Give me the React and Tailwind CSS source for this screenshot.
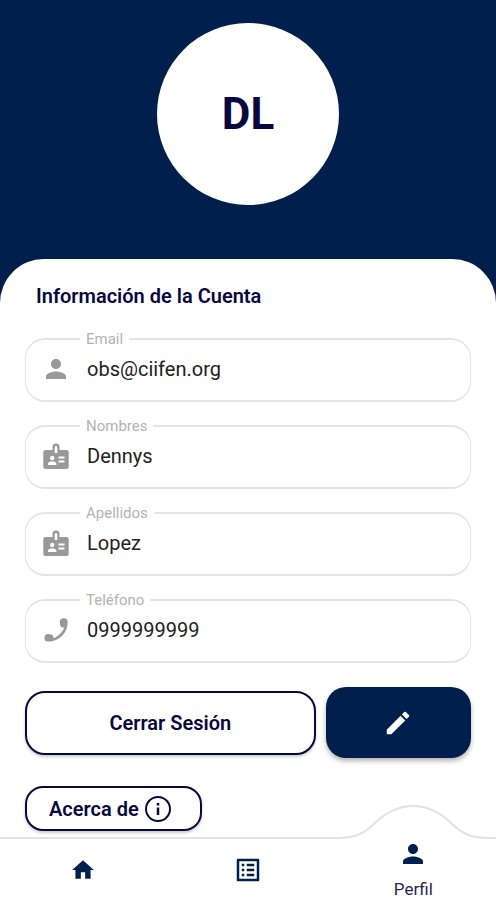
import { MdPerson, MdHome, MdListAlt } from "react-icons/md";

function BadgeIcon(props) {
  return (
    <svg viewBox="0 0 30 30" fill="currentColor" {...props}>
      <path
        fillRule="evenodd"
        d="M11.5 9V6A3.5 3.5 0 0 1 18.5 6V9H25.5A2.2 2.2 0 0 1 27.7 11.2V25.8A2.2 2.2 0 0 1 25.5 28H4.5A2.2 2.2 0 0 1 2.3 25.8V11.2A2.2 2.2 0 0 1 4.5 9ZM13.7 6.2V12H16.3V6.2A1.3 1.3 0 0 0 13.7 6.2ZM11.2 14.8A2.2 2.2 0 1 0 11.2 19.2A2.2 2.2 0 1 0 11.2 14.8ZM7 24H15.4V22.8C15.4 21.2 13.2 20.3 11.2 20.3C9.2 20.3 7 21.2 7 22.8ZM17.5 15.5V17.5H23.5V15.5ZM17.5 19.5V21.5H23.5V19.5Z"
      />
    </svg>
  );
}

function HandsetIcon(props) {
  return (
    <svg viewBox="0 0 30 30" fill="currentColor" {...props}>
      <path d="M18.8 7C18.6 4.6 20.2 3.2 22.8 3.2C25.5 3.2 26.7 4.4 26.7 7C26.7 18 18 26.6 7 26.6C4.6 26.6 3.5 25.4 3.5 22.9C3.5 20.3 4.8 19 7 19.1L9.8 19.4C11.8 19.6 12.5 20.8 12.5 23.2C17.3 21.6 21.5 17.4 23.2 12.6C20.6 12.6 19.3 11.8 19.1 9.8Z" />
    </svg>
  );
}

function PencilIcon(props) {
  return (
    <svg viewBox="0 0 24 24" fill="currentColor" {...props}>
      <path d="M3 17.46v3.04c0 .28.22.5.5.5h3.04c.13 0 .26-.05.35-.15L17.81 9.94l-3.75-3.75L3.15 17.1c-.1.1-.15.22-.15.36zM20.71 7.04a.996.996 0 0 0 0-1.41l-2.34-2.34a.996.996 0 0 0-1.41 0l-1.83 1.83 3.75 3.75 1.83-1.83z" />
    </svg>
  );
}

function InfoIcon(props) {
  return (
    <svg viewBox="0 0 30 30" fill="none" stroke="currentColor" strokeWidth="2" {...props}>
      <circle cx="15" cy="15" r="12" />
      <path d="M15 13.5V21M15 9V11.5" strokeWidth="2.5" />
    </svg>
  );
}

const fields = [
  { id: "email", label: "Email", type: "email", value: "obs@ciifen.org", Icon: MdPerson },
  { id: "nombres", label: "Nombres", type: "text", value: "Dennys", Icon: BadgeIcon },
  { id: "apellidos", label: "Apellidos", type: "text", value: "Lopez", Icon: BadgeIcon },
  { id: "telefono", label: "Teléfono", type: "tel", value: "0999999999", Icon: HandsetIcon },
];

function Field({ id, label, type, value, Icon }) {
  return (
    <fieldset className="h-[71px] min-w-0 rounded-[20px] border-x border-y-2 border-[#e4e4e4] pl-[54px]">
      <legend className="h-4 px-[6px] text-[15px] leading-4 text-[#b3b3b3]">
        <label htmlFor={id}>{label}</label>
      </legend>
      <div className="-ml-[54px] flex h-[44px] items-center gap-4 pl-[15px]">
        <Icon className="size-[30px] shrink-0 text-[#999999]" aria-hidden="true" />
        <input
          id={id}
          type={type}
          defaultValue={value}
          className="h-10 min-w-0 flex-1 bg-transparent text-xl text-[#222222] outline-none"
        />
      </div>
    </fieldset>
  );
}

function BottomNav() {
  return (
    <nav className="sticky bottom-0 mt-auto grid h-[63px] grid-cols-3 border-t-2 border-[#e2e2e2] bg-white text-[#001f4d]">
      <a href="#inicio" aria-label="Inicio" className="flex items-center justify-center">
        <MdHome className="size-[26px]" />
      </a>
      <a href="#lista" aria-label="Lista" className="flex items-center justify-center">
        <MdListAlt className="size-[30px]" />
      </a>
      <a href="#perfil" className="relative flex flex-col items-center">
        <svg
          viewBox="0 0 150 36"
          className="absolute -top-[34px] h-9 w-[150px]"
          fill="none"
          aria-hidden="true"
        >
          <path
            d="M0 33C18 33 27 28 38 17C50 6 61 1 75 1C89 1 100 6 112 17C123 28 132 33 150 33V36H0Z"
            fill="white"
          />
          <path
            d="M0 33C18 33 27 28 38 17C50 6 61 1 75 1C89 1 100 6 112 17C123 28 132 33 150 33"
            stroke="#e2e2e2"
            strokeWidth="2"
          />
        </svg>
        <MdPerson className="relative size-[30px]" />
        <span className="relative mt-[10px] text-[17px] leading-5 text-[#26264f]">Perfil</span>
      </a>
    </nav>
  );
}

export default function App() {
  return (
    <div className="flex min-h-screen flex-col bg-white font-['Roboto',sans-serif] text-[#08083f]">
      <div className="bg-[#001f4d]">
        <header className="flex justify-center pt-[23px] pb-[54px]">
          <div className="flex size-[182px] items-center justify-center rounded-full bg-white text-[44px] font-bold">
            DL
          </div>
        </header>
        <main className="rounded-t-[44px] bg-white px-[25px] pt-[23px] pb-[6px]">
          <h1 className="pl-[11px] text-xl leading-7 font-semibold">Información de la Cuenta</h1>
          <form className="mt-[21px] flex flex-col gap-4">
            {fields.map((field) => (
              <Field key={field.id} {...field} />
            ))}
            <div className="mt-2 grid grid-cols-[2fr_1fr] items-center gap-[10px]">
              <button
                type="button"
                className="h-16 rounded-[20px] border-2 border-[#08083f] bg-white text-xl font-semibold shadow-[0_2px_3px_rgba(0,0,0,0.2)]"
              >
                Cerrar Sesión
              </button>
              <button
                type="button"
                aria-label="Editar"
                className="flex h-[71px] items-center justify-center rounded-[20px] bg-[#001f4d] text-white shadow-[0_3px_5px_rgba(0,0,0,0.3)]"
              >
                <PencilIcon className="size-[30px]" aria-hidden="true" />
              </button>
            </div>
          </form>
          <button
            type="button"
            className="mt-7 flex h-[45px] w-[177px] items-center gap-1 rounded-[18px] border-2 border-[#08083f] bg-white pl-[22px] text-xl font-semibold shadow-[0_2px_3px_rgba(0,0,0,0.2)]"
          >
            Acerca de
            <InfoIcon className="size-[30px]" aria-hidden="true" />
          </button>
        </main>
      </div>
      <BottomNav />
    </div>
  );
}
